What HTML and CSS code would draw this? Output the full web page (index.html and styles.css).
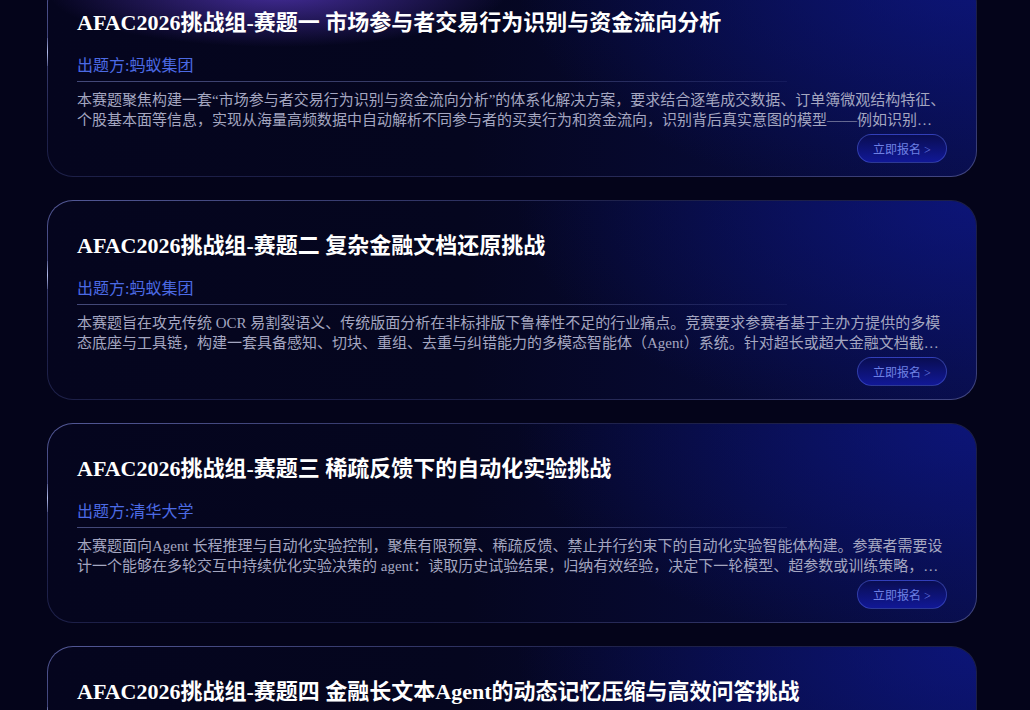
FILE: index.html
```html
<!DOCTYPE html>
<html lang="zh-CN">
<head>
<meta charset="utf-8">
<title>AFAC2026挑战组</title>
<link rel="stylesheet" href="styles.css">
</head>
<body>
<main class="list">
  <section class="card card--glow">
    <h2 class="title">AFAC2026挑战组-赛题一 市场参与者交易行为识别与资金流向分析</h2>
    <div class="org">出题方:蚂蚁集团</div>
    <div class="divider"></div>
    <p class="desc">本赛题聚焦构建一套“市场参与者交易行为识别与资金流向分析”的体系化解决方案，要求结合逐笔成交数据、订单簿微观结构特征、个股基本面等信息，实现从海量高频数据中自动解析不同参与者的买卖行为和资金流向，识别背后真实意图的模型——例如识别主力资金的建仓、洗盘与出货行为，并对未来资金流向进行预测分析。</p>
    <div class="foot"><a class="btn">立即报名 &gt;</a></div>
  </section>
  <section class="card">
    <h2 class="title">AFAC2026挑战组-赛题二 复杂金融文档还原挑战</h2>
    <div class="org">出题方:蚂蚁集团</div>
    <div class="divider"></div>
    <p class="desc">本赛题旨在攻克传统 OCR 易割裂语义、传统版面分析在非标排版下鲁棒性不足的行业痛点。竞赛要求参赛者基于主办方提供的多模态底座与工具链，构建一套具备感知、切块、重组、去重与纠错能力的多模态智能体（Agent）系统。针对超长或超大金融文档截图，实现结构化内容的高保真还原。</p>
    <div class="foot"><a class="btn">立即报名 &gt;</a></div>
  </section>
  <section class="card">
    <h2 class="title">AFAC2026挑战组-赛题三 稀疏反馈下的自动化实验挑战</h2>
    <div class="org">出题方:清华大学</div>
    <div class="divider"></div>
    <p class="desc">本赛题面向Agent 长程推理与自动化实验控制，聚焦有限预算、稀疏反馈、禁止并行约束下的自动化实验智能体构建。参赛者需要设计一个能够在多轮交互中持续优化实验决策的 agent：读取历史试验结果，归纳有效经验，决定下一轮模型、超参数或训练策略，并在有限预算内取得最优实验效果。</p>
    <div class="foot"><a class="btn">立即报名 &gt;</a></div>
  </section>
  <section class="card">
    <h2 class="title">AFAC2026挑战组-赛题四 金融长文本Agent的动态记忆压缩与高效问答挑战</h2>
    <div class="org">出题方:蚂蚁集团</div>
    <div class="divider"></div>
    <p class="desc">本赛题聚焦金融长文本场景下智能体的动态记忆压缩与高效问答能力，要求参赛者构建能够在超长上下文中持续管理记忆、压缩关键信息并准确回答复杂问题的 Agent 系统。</p>
    <div class="foot"><a class="btn">立即报名 &gt;</a></div>
  </section>
</main>
</body>
</html>
```
FILE: styles.css
```css
html, body {
  margin: 0;
  padding: 0;
  background: #04041a;
  overflow: hidden;
}

body {
  font-family: "Liberation Serif", "Noto Sans CJK SC", serif;
}

.list {
  display: flex;
  flex-direction: column;
  gap: 23px;
  margin-top: -23px;
  padding: 0 53px 0 47px;
}

.card {
  position: relative;
  width: 930px;
  box-sizing: border-box;
  border-radius: 26px;
  border: 1px solid transparent;
  padding: 29px 29px 13px 29px;
  background:
    radial-gradient(ellipse 460px 230px at 100% 0%, rgba(14, 24, 140, 0.7), rgba(14, 24, 140, 0) 100%) padding-box,
    linear-gradient(90deg, #05051e 0%, #05061f 45%, #080d48 100%) padding-box,
    linear-gradient(165deg, rgba(150, 160, 255, 0.55), rgba(100, 110, 200, 0.28) 35%, rgba(100, 110, 200, 0.25) 70%, rgba(130, 140, 240, 0.5)) border-box;
}

.card--glow {
  background:
    radial-gradient(ellipse 230px 55px at 230px 14px, rgba(110, 70, 235, 0.6), rgba(70, 50, 200, 0) 100%) padding-box,
    radial-gradient(ellipse 460px 230px at 100% 0%, rgba(14, 24, 140, 0.7), rgba(14, 24, 140, 0) 100%) padding-box,
    linear-gradient(90deg, #05051e 0%, #05061f 45%, #080d48 100%) padding-box,
    linear-gradient(165deg, rgba(150, 160, 255, 0.55), rgba(100, 110, 200, 0.28) 35%, rgba(100, 110, 200, 0.25) 70%, rgba(130, 140, 240, 0.5)) border-box;
}

.card::before {
  content: "";
  position: absolute;
  left: -1px;
  top: 60px;
  width: 1px;
  height: 28px;
  background: linear-gradient(180deg, rgba(190, 200, 255, 0.2), rgba(200, 210, 255, 0.85) 50%, rgba(190, 200, 255, 0.2));
}

.title {
  margin: 0;
  font-size: 22px;
  line-height: 32px;
  font-weight: bold;
  color: #ffffff;
  white-space: nowrap;
}

.org {
  margin-top: 15px;
  padding-bottom: 3px;
  font-size: 16px;
  line-height: 24px;
  color: #4c6ae4;
}

.divider {
  width: 710px;
  height: 1px;
  background: linear-gradient(90deg, rgba(130, 140, 210, 0.5), rgba(120, 130, 200, 0.35) 70%, rgba(120, 130, 200, 0.1));
}

.desc {
  margin: 8px 0 0 0;
  font-size: 15px;
  line-height: 20px;
  height: 40px;
  color: #a4a6c0;
  display: -webkit-box;
  -webkit-box-orient: vertical;
  -webkit-line-clamp: 2;
  overflow: hidden;
}

.foot {
  display: flex;
  justify-content: flex-end;
  margin-top: 4px;
}

.btn {
  width: 90px;
  height: 29px;
  box-sizing: border-box;
  border-radius: 15px;
  border: 1px solid rgba(90, 110, 230, 0.45);
  background: linear-gradient(180deg, #090d52, #111896);
  color: #6e80e4;
  font-size: 12px;
  display: flex;
  align-items: center;
  justify-content: center;
  cursor: pointer;
}
```
